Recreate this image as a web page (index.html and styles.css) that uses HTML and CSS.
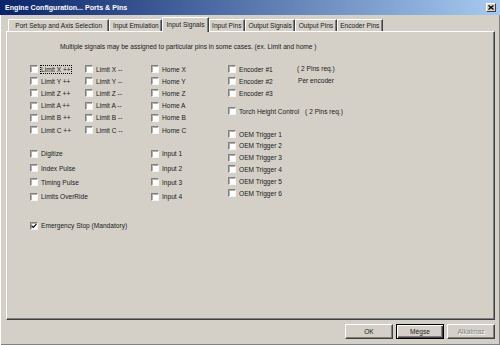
FILE: index.html
```html
<!DOCTYPE html>
<html>

<head>
    <meta charset="utf-8">
    <title>Engine Configuration... Ports &amp; Pins</title>
    <link rel="stylesheet" href="styles.css">
</head>

<body>
    <div class="window">
        <div class="titlebar">
            <span class="title">Engine Configuration... Ports &amp; Pins</span>
            <span class="close">
                <svg width="6" height="5" viewBox="0 0 6 5"><path d="M0.5 0.5 L5.5 4.5 M5.5 0.5 L0.5 4.5" stroke="#000" stroke-width="1.3"/></svg>
            </span>
        </div>

        <ul class="tabs">
            <li class="first">Port Setup and Axis Selection</li>
            <li>Input Emulation</li>
            <li class="current">Input Signals</li>
            <li>Input Pins</li>
            <li>Output Signals</li>
            <li>Output Pins</li>
            <li>Encoder Pins</li>
        </ul>

        <div class="panel">
            <p class="note">Multiple signals may be assigned to particular pins in some cases. (ex. Limit and home )</p>

            <div class="signals">
                <div class="left">
                    <!-- limits / home -->
                    <div class="grid3">
                        <label class="chk"><span class="box"></span><span class="focus">Limit X ++</span></label>
                        <label class="chk"><span class="box"></span>Limit X --</label>
                        <label class="chk"><span class="box"></span>Home X</label>
                        <label class="chk"><span class="box"></span>Limit Y ++</label>
                        <label class="chk"><span class="box"></span>Limit Y --</label>
                        <label class="chk"><span class="box"></span>Home Y</label>
                        <label class="chk"><span class="box"></span>Limit Z ++</label>
                        <label class="chk"><span class="box"></span>Limit Z --</label>
                        <label class="chk"><span class="box"></span>Home Z</label>
                        <label class="chk"><span class="box"></span>Limit A ++</label>
                        <label class="chk"><span class="box"></span>Limit A --</label>
                        <label class="chk"><span class="box"></span>Home A</label>
                        <label class="chk"><span class="box"></span>Limit B ++</label>
                        <label class="chk"><span class="box"></span>Limit B --</label>
                        <label class="chk"><span class="box"></span>Home B</label>
                        <label class="chk"><span class="box"></span>Limit C ++</label>
                        <label class="chk"><span class="box"></span>Limit C --</label>
                        <label class="chk"><span class="box"></span>Home C</label>
                    </div>

                    <!-- misc / inputs -->
                    <div class="grid2">
                        <label class="chk"><span class="box"></span>Digitize</label>
                        <label class="chk"><span class="box"></span>Input 1</label>
                        <label class="chk"><span class="box"></span>Index Pulse</label>
                        <label class="chk"><span class="box"></span>Input 2</label>
                        <label class="chk"><span class="box"></span>Timing Pulse</label>
                        <label class="chk"><span class="box"></span>Input 3</label>
                        <label class="chk"><span class="box"></span>Limits OverRide</label>
                        <label class="chk"><span class="box"></span>Input 4</label>
                    </div>

                    <label class="chk estop">
                        <span class="box">
                            <svg width="6" height="6" viewBox="0 0 6 6"><path d="M0.6 2.6 L2.3 4.3 L5.4 1.1" stroke="#000" stroke-width="1.2" fill="none"/></svg>
                        </span>Emergency Stop (Mandatory)
                    </label>
                </div>

                <div class="right">
                    <div class="encoders">
                        <div class="enc-list">
                            <label class="chk"><span class="box"></span>Encoder #1</label>
                            <label class="chk"><span class="box"></span>Encoder #2</label>
                            <label class="chk"><span class="box"></span>Encoder #3</label>
                        </div>
                        <div class="req">
                            <span>( 2 Pins req.)</span>
                            <span>Per encoder</span>
                        </div>
                    </div>

                    <div class="torch">
                        <label class="chk"><span class="box"></span>Torch Height Control</label>
                        <span class="torch-req">( 2 Pins req.)</span>
                    </div>

                    <div class="oem">
                        <label class="chk"><span class="box"></span>OEM Trigger 1</label>
                        <label class="chk"><span class="box"></span>OEM Trigger 2</label>
                        <label class="chk"><span class="box"></span>OEM Trigger 3</label>
                        <label class="chk"><span class="box"></span>OEM Trigger 4</label>
                        <label class="chk"><span class="box"></span>OEM Trigger 5</label>
                        <label class="chk"><span class="box"></span>OEM Trigger 6</label>
                    </div>
                </div>
            </div>
        </div>

        <div class="buttons">
            <a class="btn" href="javascript:void(0)">OK</a>
            <a class="btn default" href="javascript:void(0)">Mégse</a>
            <a class="btn disabled" href="javascript:void(0)">Alkalmaz</a>
        </div>
    </div>
</body>

</html>
```

FILE: styles.css
```css
*{
    padding: 0;
    margin: 0;
    box-sizing: border-box;
}
ul{
    list-style: none;
}
a{
    text-decoration: none;
    color: #1a1a1a;
}
html,body{
    width: 100%;
    height: 100%;
}
body{
    background-color: #d4d0c8;
    font-family: "Liberation Sans", Arial, sans-serif;
    font-size: 6.6px;
    color: #1a1a1a;
}
.window{
    width: 500px;
    height: 345px;
    box-shadow: inset 1px 0 #fff, inset -1px -1px #808080;
}

/* title bar */
.titlebar{
    height: 15px;
    display: flex;
    align-items: center;
    justify-content: space-between;
    padding: 0 4px 0 5px;
    background: linear-gradient(to right, #0a246a, #a6caf0);
}
.title{
    color: #fff;
    font-weight: 700;
    font-size: 7.1px;
}
.close{
    width: 10px;
    height: 9px;
    display: flex;
    align-items: center;
    justify-content: center;
    background-color: #d4d0c8;
    border: 1px solid;
    border-color: #fff #404040 #404040 #fff;
}

/* tabs */
.tabs{
    height: 16px;
    display: flex;
    align-items: flex-end;
    padding-left: 8px;
}
.tabs li{
    height: 12px;
    display: flex;
    align-items: center;
    padding: 0 2.5px;
    border-top: 1px solid #fff;
    border-left: 1px solid #fff;
    border-right: 1px solid #404040;
    box-shadow: inset -1px 0 #808080;
    white-space: nowrap;
}
.tabs li.first{
    padding: 0 6.3px;
}
.tabs li.current{
    position: relative;
    z-index: 1;
    height: 15px;
    margin-bottom: -1px;
    padding: 0 3.1px 2px;
    background-color: #d4d0c8;
}

/* panel */
.panel{
    height: 289px;
    margin: 0 5px 0 6px;
    border-top: 1px solid #fff;
    border-left: 1px solid #fff;
    border-right: 1px solid #404040;
    border-bottom: 1px solid #404040;
    box-shadow: inset -1px -1px #808080;
}
.note{
    line-height: 8px;
    margin-top: 11px;
    padding-left: 53px;
}
.signals{
    display: flex;
    margin-top: 12px;
    padding-left: 23px;
}
.left{
    width: 198px;
}
.grid3{
    display: grid;
    grid-template-columns: 55px 66px 77px;
    grid-auto-rows: 12.2px;
}
.grid2{
    display: grid;
    grid-template-columns: 121px 77px;
    grid-auto-rows: 14.3px;
    margin-top: 10.6px;
}
.chk{
    display: flex;
    align-items: center;
    gap: 3px;
    height: 12.2px;
    white-space: nowrap;
}
.grid2 .chk{
    height: 14.3px;
}
.box{
    width: 8px;
    height: 8px;
    flex: none;
    display: flex;
    align-items: center;
    justify-content: center;
    background-color: #fff;
    border: 1px solid;
    border-color: #808080 #f4f4f4 #f4f4f4 #808080;
    box-shadow: inset 1px 1px #b0b0b0;
}
.focus{
    line-height: 7px;
    outline: 1px dotted #000;
}
.estop{
    margin-top: 15.8px;
}

/* right column */
.encoders{
    display: flex;
}
.enc-list{
    width: 69px;
}
.req{
    display: flex;
    flex-direction: column;
}
.req span{
    line-height: 12.2px;
}
.req span + span{
    padding-left: 1px;
}
.torch{
    display: flex;
    align-items: center;
    gap: 6px;
    margin-top: 5.4px;
}
.oem{
    margin-top: 11px;
}
.oem .chk{
    height: 11.8px;
}

/* buttons */
.buttons{
    display: flex;
    justify-content: flex-end;
    gap: 3px;
    padding: 4px 5px 0 0;
}
.btn{
    width: 48px;
    height: 15px;
    display: flex;
    align-items: center;
    justify-content: center;
    border: 1px solid;
    border-color: #fff #404040 #404040 #fff;
    box-shadow: inset -1px -1px #808080;
}
.btn.default{
    border-color: #000;
    box-shadow: inset 1px 1px #fff, inset -1px -1px #404040, inset -2px -2px #808080;
}
.btn.disabled{
    color: #808080;
    text-shadow: 1px 1px #fff;
}
```
